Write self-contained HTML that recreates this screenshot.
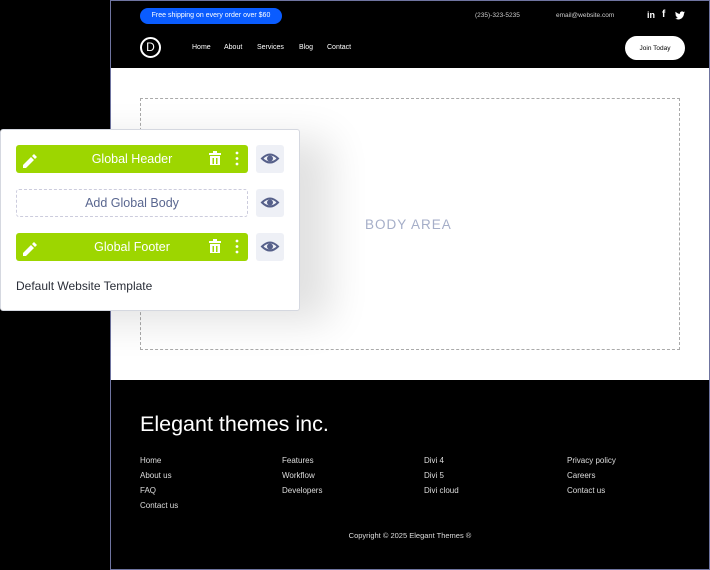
<!DOCTYPE html>
<html><head><style>
*{margin:0;padding:0;box-sizing:border-box}
body{width:710px;height:570px;background:#000;position:relative;overflow:hidden;font-family:"Liberation Sans",sans-serif}
.frame{position:absolute;left:110px;top:0;width:600px;height:570px;border:1px solid #6f74a0;background:#000}
.abs{position:absolute}
.w{color:#fff}
.nav{font-size:7px;color:#fff;top:43px}
.fl{font-size:8px;color:#ddd;position:absolute}
.bar{position:absolute;left:15px;width:232px;height:28px;border-radius:3px;background:#9dd600;color:#fff;font-size:12.5px;text-align:center;line-height:28px}
.eye{position:absolute;left:255px;width:28px;height:28px;background:#eef0f6;border-radius:3px}
</style></head><body>
<div class="frame">
 <div class="abs" style="left:29px;top:7px;width:142px;height:16px;border-radius:8px;background:#0a5cff;color:#fff;font-size:7px;line-height:16px;text-align:center">Free shipping on every order over $60</div>
 <div class="abs w" style="left:364px;top:11px;font-size:6.5px;color:#ccc">(235)-323-5235</div>
 <div class="abs w" style="left:445px;top:11px;font-size:6.5px;color:#ccc">email@website.com</div>
 <div class="abs w" style="left:536px;top:9px;font-size:9px;font-weight:bold">in</div>
 <div class="abs w" style="left:551px;top:8px;font-size:10px;font-weight:bold">f</div>
 <svg class="abs" style="left:564px;top:10px" width="10" height="9" viewBox="0 0 24 20"><path fill="#fff" d="M24 2.4a10 10 0 0 1-2.8.8A5 5 0 0 0 23.3.5a10 10 0 0 1-3.1 1.2A4.9 4.9 0 0 0 11.8 6 14 14 0 0 1 1.7.9a4.9 4.9 0 0 0 1.5 6.6A5 5 0 0 1 1 6.9a4.9 4.9 0 0 0 3.9 4.8 5 5 0 0 1-2.2.1 4.9 4.9 0 0 0 4.6 3.4A9.9 9.9 0 0 1 0 17.3 14 14 0 0 0 7.5 19.5c9 0 14-7.5 14-14v-.6A10 10 0 0 0 24 2.4z"/></svg>
 <div class="abs" style="left:29px;top:36px;width:21px;height:21px;border:2px solid #fff;border-radius:50%;color:#fff;font-size:12px;text-align:center;line-height:17px">D</div>
 <div class="abs nav" style="left:81px">Home</div>
 <div class="abs nav" style="left:113px">About</div>
 <div class="abs nav" style="left:146px">Services</div>
 <div class="abs nav" style="left:188px">Blog</div>
 <div class="abs nav" style="left:216px">Contact</div>
 <div class="abs" style="left:514px;top:35px;width:60px;height:24px;border-radius:12px;background:#fff;color:#000;font-size:6.5px;display:flex;align-items:center;justify-content:center">Join Today</div>
 <div class="abs" style="left:0;top:67px;width:598px;height:312px;background:#fff">
  <div class="abs" style="left:29px;top:30px;width:540px;height:252px;border:1px dashed #aaa"></div>
  <div class="abs" style="left:254px;top:149px;font-size:13.5px;color:#a5aec8;letter-spacing:1px">BODY AREA</div>
 </div>
 <div class="abs w" style="left:29px;top:411px;font-size:21.5px">Elegant themes inc.</div>
 <div class="fl" style="left:29px;top:455px">Home</div><div class="fl" style="left:29px;top:470px">About us</div><div class="fl" style="left:29px;top:485px">FAQ</div><div class="fl" style="left:29px;top:500px">Contact us</div>
 <div class="fl" style="left:171px;top:455px">Features</div><div class="fl" style="left:171px;top:470px">Workflow</div><div class="fl" style="left:171px;top:485px">Developers</div>
 <div class="fl" style="left:313px;top:455px">Divi 4</div><div class="fl" style="left:313px;top:470px">Divi 5</div><div class="fl" style="left:313px;top:485px">Divi cloud</div>
 <div class="fl" style="left:456px;top:455px">Privacy policy</div><div class="fl" style="left:456px;top:470px">Careers</div><div class="fl" style="left:456px;top:485px">Contact us</div>
 <div class="abs" style="left:0;width:598px;top:530px;text-align:center;font-size:7.5px;color:#ddd">Copyright © 2025 Elegant Themes ®</div>
</div>
<div class="abs" style="left:0;top:129px;width:300px;height:182px;background:#fff;border:1px solid #d5d8e0;border-radius:3px;box-shadow:30px 10px 40px rgba(0,0,0,0.12)">
 <div class="bar" style="top:15px">Global Header</div>
 <div class="bar" style="top:103px">Global Footer</div>
 <div class="abs" style="left:15px;top:59px;width:232px;height:28px;border:1px dashed #ccd;border-radius:3px;color:#5a6790;font-size:12.5px;text-align:center;line-height:26px">Add Global Body</div>
 <div class="eye" style="top:15px"></div><div class="eye" style="top:59px"></div><div class="eye" style="top:103px"></div>
 <div class="abs" style="left:15px;top:149px;font-size:12px;color:#2a2e38">Default Website Template</div>
</div>
<svg class="abs" style="left:0;top:0" width="300" height="320">
 <g fill="#fff">
  <path d="M23 165l8-8 3 3-8 8h-3z M32 156l2-2 3 3-2 2z"/>
  <path d="M23 253l8-8 3 3-8 8h-3z M32 244l2-2 3 3-2 2z"/>
  <path d="M209 153h12v2h-12z M213 151h4v2h-4z M210 156h10v9h-10z" />
  <path d="M209 241h12v2h-12z M213 239h4v2h-4z M210 244h10v9h-10z" />
  <circle cx="237" cy="153" r="1.4"/><circle cx="237" cy="158.5" r="1.4"/><circle cx="237" cy="164" r="1.4"/>
  <circle cx="237" cy="241" r="1.4"/><circle cx="237" cy="246.5" r="1.4"/><circle cx="237" cy="252" r="1.4"/>
 </g>
 <rect x="212.5" y="158" width="1.5" height="6" fill="#9dd600"/><rect x="216" y="158" width="1.5" height="6" fill="#9dd600"/>
 <rect x="212.5" y="246" width="1.5" height="6" fill="#9dd600"/><rect x="216" y="246" width="1.5" height="6" fill="#9dd600"/>
 <g fill="none" stroke="#56608a" stroke-width="2">
  <path d="M262 158.5q8-8 16 0q-8 8-16 0z"/><circle cx="270" cy="158.5" r="2" fill="#56608a"/>
  <path d="M262 202.5q8-8 16 0q-8 8-16 0z"/><circle cx="270" cy="202.5" r="2" fill="#56608a"/>
  <path d="M262 246.5q8-8 16 0q-8 8-16 0z"/><circle cx="270" cy="246.5" r="2" fill="#56608a"/>
 </g>
</svg>
</body></html>
